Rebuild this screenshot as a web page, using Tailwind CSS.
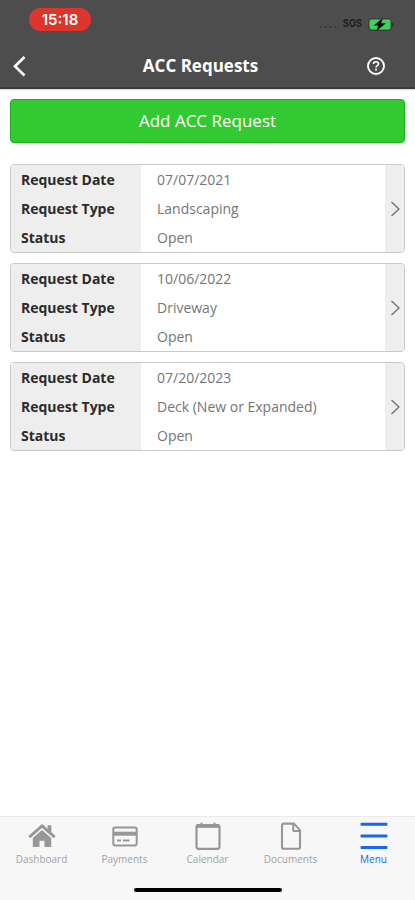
<!DOCTYPE html>
<html lang="en">
<head>
<meta charset="utf-8">
<meta name="viewport" content="width=device-width, initial-scale=1">
<title>ACC Requests</title>
<script src="https://cdn.jsdelivr.net/npm/@tailwindcss/browser@4"></script>
</head>
<body class="min-h-screen flex flex-col bg-white font-['Open_Sans','Noto_Sans',sans-serif]">
<header class="bg-[#4d4d4d] border-b-2 border-[#3c3c3c] shadow-[0_1px_1px_#d8d8d8]">
  <div class="h-[45px] pt-2 pl-[29px] pr-[21px] flex items-start justify-between">
    <span class="h-[23px] w-[62px] rounded-full bg-[#dc352c] text-white text-[15px] leading-[23px] font-semibold text-center font-['Inter',sans-serif]">15:18</span>
    <div class="h-8 flex items-center gap-[6px] text-[#1f1f1f]">
      <svg class="w-[18px] h-[10px]" viewBox="0 0 18 10" fill="#353535" aria-hidden="true"><circle cx="2" cy="8" r="1"/><circle cx="6.7" cy="8" r="1"/><circle cx="11.3" cy="8" r="1"/><circle cx="16" cy="8" r="1"/></svg>
      <span class="text-[10px] leading-[12px] font-bold font-['Roboto',sans-serif]">SOS</span>
      <svg class="w-[26px] h-[13px]" viewBox="0 0 26 13" aria-hidden="true"><rect x=".7" y=".7" width="22.6" height="11.6" rx="3.2" fill="#4d4d4d" stroke="#3a3a3a" stroke-width="1"/><rect x="1.6" y="1.6" width="20.8" height="9.8" rx="2" fill="#41d05c"/><path d="M24.3 4.4c1.8.6 1.8 3.6 0 4.2z" fill="#292929"/><path d="M14.2.8 6.3 7.3h4.3L9 12.3l8.4-6.9h-4.5z" fill="#080808" stroke="#080808" stroke-width=".5"/></svg>
    </div>
  </div>
  <div class="h-[42px] px-[10px] grid grid-cols-[36px_1fr_50px] items-center">
    <button type="button" aria-label="Back" class="h-9 flex items-center"><svg class="w-5 h-6" viewBox="0 0 20 24" fill="none" stroke="#fff" stroke-width="2.6" aria-hidden="true"><path d="M14.5 3 5 12.2l9.5 9.3"/></svg></button>
    <h1 class="text-center text-white text-[17px] leading-6 font-bold">ACC Requests</h1>
    <button type="button" aria-label="Help" class="h-9 pl-[11px] flex items-center"><svg class="w-5 h-5" viewBox="0 0 20 20" fill="none" stroke="#fff" aria-hidden="true"><circle cx="10" cy="10" r="8" stroke-width="1.9"/><path d="M7.4 8.1c.1-3.3 5.3-3.1 5.1-.1-.1 1.7-2.5 1.7-2.5 3.6" stroke-width="1.6"/><path d="M10 12.7v1.8" stroke-width="1.8"/></svg></button>
  </div>
</header>

<main class="flex-1 px-[10px] pt-[10px]">
  <button type="button" class="w-full h-11 rounded-[4px] border border-[#16b516] bg-[#33c933] text-white text-[17px] leading-6">Add ACC Request</button>
  <ul class="mt-[21px] flex flex-col gap-[10px] text-[14px] leading-[29px]">
    <li><a href="#" aria-label="Request 07/07/2021" class="flex rounded-[4px] border border-[#c9c9c9] bg-white overflow-hidden">
      <dl class="flex-1 grid grid-cols-[130px_1fr]">
        <dt class="bg-[#eee] pl-[10px] font-bold text-[#2b2b2b]">Request Date</dt><dd class="pl-4 text-[#757575]">07/07/2021</dd>
        <dt class="bg-[#eee] pl-[10px] font-bold text-[#2b2b2b]">Request Type</dt><dd class="pl-4 text-[#757575]">Landscaping</dd>
        <dt class="bg-[#eee] pl-[10px] font-bold text-[#2b2b2b]">Status</dt><dd class="pl-4 text-[#757575]">Open</dd>
      </dl>
      <span class="w-[19px] bg-[#eee] flex items-center justify-center"><svg class="w-[10px] h-4" viewBox="0 0 10 16" fill="none" stroke="#777" stroke-width="1.5" aria-hidden="true"><path d="M1.5 1 9 8l-7.5 7"/></svg></span>
    </a></li>
    <li><a href="#" aria-label="Request 10/06/2022" class="flex rounded-[4px] border border-[#c9c9c9] bg-white overflow-hidden">
      <dl class="flex-1 grid grid-cols-[130px_1fr]">
        <dt class="bg-[#eee] pl-[10px] font-bold text-[#2b2b2b]">Request Date</dt><dd class="pl-4 text-[#757575]">10/06/2022</dd>
        <dt class="bg-[#eee] pl-[10px] font-bold text-[#2b2b2b]">Request Type</dt><dd class="pl-4 text-[#757575]">Driveway</dd>
        <dt class="bg-[#eee] pl-[10px] font-bold text-[#2b2b2b]">Status</dt><dd class="pl-4 text-[#757575]">Open</dd>
      </dl>
      <span class="w-[19px] bg-[#eee] flex items-center justify-center"><svg class="w-[10px] h-4" viewBox="0 0 10 16" fill="none" stroke="#777" stroke-width="1.5" aria-hidden="true"><path d="M1.5 1 9 8l-7.5 7"/></svg></span>
    </a></li>
    <li><a href="#" aria-label="Request 07/20/2023" class="flex rounded-[4px] border border-[#c9c9c9] bg-white overflow-hidden">
      <dl class="flex-1 grid grid-cols-[130px_1fr]">
        <dt class="bg-[#eee] pl-[10px] font-bold text-[#2b2b2b]">Request Date</dt><dd class="pl-4 text-[#757575]">07/20/2023</dd>
        <dt class="bg-[#eee] pl-[10px] font-bold text-[#2b2b2b]">Request Type</dt><dd class="pl-4 text-[#757575]">Deck (New or Expanded)</dd>
        <dt class="bg-[#eee] pl-[10px] font-bold text-[#2b2b2b]">Status</dt><dd class="pl-4 text-[#757575]">Open</dd>
      </dl>
      <span class="w-[19px] bg-[#eee] flex items-center justify-center"><svg class="w-[10px] h-4" viewBox="0 0 10 16" fill="none" stroke="#777" stroke-width="1.5" aria-hidden="true"><path d="M1.5 1 9 8l-7.5 7"/></svg></span>
    </a></li>
  </ul>
</main>

<footer class="bg-[#f7f7f7] border-t border-[#e9e9e9] pt-[5px] pb-2">
  <nav class="grid grid-cols-5 text-[10px] leading-[14px] text-[#a3a3a3]">
    <a href="#" class="flex flex-col items-center gap-[2px]">
      <svg class="w-7 h-7" viewBox="0 0 28 28" fill="#979797" aria-hidden="true"><path d="M19.5 3.2h3.8v8.5l-3.8-3.3z"/><path d="M1.3 15.2 14 4l12.7 11.2" fill="none" stroke="#979797" stroke-width="2.9"/><path d="M14 8 4.8 16v9h6.7v-6.3h5V25h6.7v-9z"/></svg>
      <span>Dashboard</span></a>
    <a href="#" class="flex flex-col items-center gap-[2px]">
      <svg class="w-7 h-7" viewBox="0 0 28 28" fill="none" stroke="#979797" aria-hidden="true"><rect x="2.3" y="5.6" width="23.4" height="17.8" rx="1.8" stroke-width="2"/><path d="M2 11.7h24" stroke-width="4"/><path d="M6 18.6h4M12 18.6h6.5" stroke-width="2"/></svg>
      <span>Payments</span></a>
    <a href="#" class="flex flex-col items-center gap-[2px]">
      <svg class="w-7 h-7" viewBox="0 0 28 28" fill="none" stroke="#979797" aria-hidden="true"><rect x="2.5" y="3" width="23" height="23.8" rx="2" stroke-width="2.2"/><path d="M2.5 4.2h23" stroke-width="3.4"/><path d="M7.5.8v4M20.5.8v4" stroke-width="2.2"/></svg>
      <span>Calendar</span></a>
    <a href="#" class="flex flex-col items-center gap-[2px]">
      <svg class="w-7 h-7" viewBox="0 0 28 28" fill="none" stroke="#979797" stroke-width="2.1" stroke-linejoin="round" aria-hidden="true"><path d="M17 1.6H6.8A1.8 1.8 0 0 0 5 3.4v21.6a1.8 1.8 0 0 0 1.8 1.8h14.4A1.8 1.8 0 0 0 23 25V8.1z"/><path d="M16.2 2v5.4A1.6 1.6 0 0 0 17.8 9h5"/></svg>
      <span>Documents</span></a>
    <a href="#" aria-current="page" class="flex flex-col items-center gap-[2px] text-[#1b66ef]">
      <svg class="w-7 h-7" viewBox="0 0 28 28" fill="#1b66ef" aria-hidden="true"><rect x=".5" y=".7" width="27" height="3" rx="1"/><rect x=".5" y="12.4" width="27" height="3" rx="1"/><rect x=".5" y="24" width="27" height="3" rx="1"/></svg>
      <span>Menu</span></a>
  </nav>
  <div class="mx-auto mt-[22px] h-1 w-[148px] rounded-full bg-black"></div>
</footer>
</body>
</html>
